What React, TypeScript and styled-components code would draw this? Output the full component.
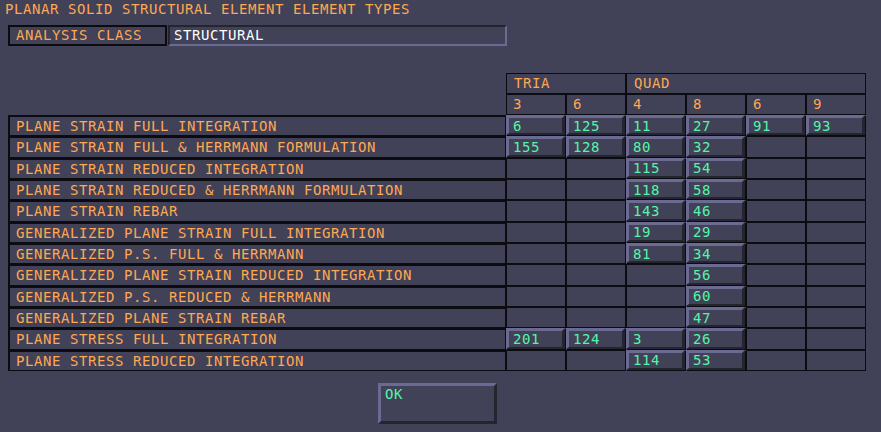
import styled, { createGlobalStyle } from "styled-components";

const BG = "#414158";
const LIGHT = "#6a6a92";
const DARK = "#25252f";
const LINE = "#0b0b10";
const ORANGE = "#ffa852";
const GREEN = "#55f5a8";

type Row = { name: string; ids: (number | null)[] };

const rows: Row[] = [
  { name: "PLANE STRAIN FULL INTEGRATION", ids: [6, 125, 11, 27, 91, 93] },
  { name: "PLANE STRAIN FULL & HERRMANN FORMULATION", ids: [155, 128, 80, 32, null, null] },
  { name: "PLANE STRAIN REDUCED INTEGRATION", ids: [null, null, 115, 54, null, null] },
  { name: "PLANE STRAIN REDUCED & HERRMANN FORMULATION", ids: [null, null, 118, 58, null, null] },
  { name: "PLANE STRAIN REBAR", ids: [null, null, 143, 46, null, null] },
  { name: "GENERALIZED PLANE STRAIN FULL INTEGRATION", ids: [null, null, 19, 29, null, null] },
  { name: "GENERALIZED P.S. FULL & HERRMANN", ids: [null, null, 81, 34, null, null] },
  { name: "GENERALIZED PLANE STRAIN REDUCED INTEGRATION", ids: [null, null, null, 56, null, null] },
  { name: "GENERALIZED P.S. REDUCED & HERRMANN", ids: [null, null, null, 60, null, null] },
  { name: "GENERALIZED PLANE STRAIN REBAR", ids: [null, null, null, 47, null, null] },
  { name: "PLANE STRESS FULL INTEGRATION", ids: [201, 124, 3, 26, null, null] },
  { name: "PLANE STRESS REDUCED INTEGRATION", ids: [null, null, 114, 53, null, null] },
];

const nodeCounts = ["3", "6", "4", "8", "6", "9"];

function App() {
  return (
    <>
      <GlobalStyle />
      <Page>
        <Title>PLANAR SOLID STRUCTURAL ELEMENT ELEMENT TYPES</Title>
        <ClassRow>
          <ClassLabel>ANALYSIS CLASS</ClassLabel>
          <ClassField>STRUCTURAL</ClassField>
        </ClassRow>
        <Table>
          <Corner />
          <Family $span={2}>TRIA</Family>
          <Family $span={4}>QUAD</Family>
          {nodeCounts.map((n, i) => (
            <Header key={i}>{n}</Header>
          ))}
          {rows.map((row) => (
            <RowGroup key={row.name}>
              <RowLabel>{row.name}</RowLabel>
              {row.ids.map((id, i) =>
                id === null ? (
                  <Cell key={i} />
                ) : (
                  <IdButton key={i}>{id}</IdButton>
                )
              )}
            </RowGroup>
          ))}
        </Table>
        <Footer>
          <OkButton>OK</OkButton>
        </Footer>
      </Page>
    </>
  );
}

const GlobalStyle = createGlobalStyle`
  html, body {
    margin: 0;
    padding: 0;
    background: ${BG};
  }
  body {
    font-family: "DejaVu Sans Mono", "Liberation Mono", monospace;
    font-size: 14px;
    letter-spacing: 0.57px;
    color: ${ORANGE};
  }
`;

const Page = styled.div`
  width: 881px;
  height: 432px;
  box-sizing: border-box;
  padding: 0 0 0 8px;
  display: flex;
  flex-direction: column;
  overflow: hidden;
`;

const Title = styled.div`
  height: 25px;
  line-height: 18px;
  margin-left: -3px;
`;

const ClassRow = styled.div`
  display: flex;
  height: 21px;
`;

const ClassLabel = styled.div`
  width: 159px;
  box-sizing: border-box;
  border: 2px solid ${LINE};
  padding-left: 6px;
  line-height: 17px;
`;

const ClassField = styled.div`
  width: 339px;
  margin-left: 1px;
  box-sizing: border-box;
  border-style: solid;
  border-width: 2px;
  border-color: ${DARK} ${LIGHT} ${LIGHT} ${DARK};
  padding-left: 4px;
  line-height: 17px;
  color: #ffffff;
`;

const Table = styled.div`
  margin-top: 27px;
  display: grid;
  grid-template-columns: 498px repeat(6, 60px);
  grid-template-rows: 21px 21px repeat(12, 21.34px);
`;

const RowGroup = styled.div`
  display: contents;
`;

const Corner = styled.div`
  grid-row: span 2;
`;

const Family = styled.div<{ $span: number }>`
  grid-column: span ${(p) => p.$span};
  border: 1px solid ${LINE};
  padding-left: 7px;
  line-height: 19px;
`;

const Header = styled.div`
  border: 1px solid ${LINE};
  padding-left: 6px;
  line-height: 19px;
`;

const RowLabel = styled.div`
  border-style: solid;
  border-color: ${LINE};
  border-width: 2px 1px 1px 2px;
  padding-left: 6px;
  display: flex;
  align-items: center;
  white-space: nowrap;
`;

const Cell = styled.div`
  border: 1px solid ${LINE};
`;

const IdButton = styled.div`
  margin: 0 1px 1px 0;
  box-shadow: 1px 1px 0 ${LINE};
  border-style: solid;
  border-width: 3px 3px 2px 3px;
  border-color: ${LIGHT} ${DARK} ${DARK} ${LIGHT};
  padding-left: 4px;
  display: flex;
  align-items: center;
  color: ${GREEN};
`;

const Footer = styled.div`
  margin-top: 12px;
  padding-left: 370px;
`;

const OkButton = styled.div`
  width: 119px;
  height: 41px;
  box-sizing: border-box;
  border-style: solid;
  border-width: 3px;
  border-color: ${LIGHT} ${DARK} ${DARK} ${LIGHT};
  padding: 1px 0 0 4px;
  line-height: 15px;
  color: ${GREEN};
`;

export default App;
